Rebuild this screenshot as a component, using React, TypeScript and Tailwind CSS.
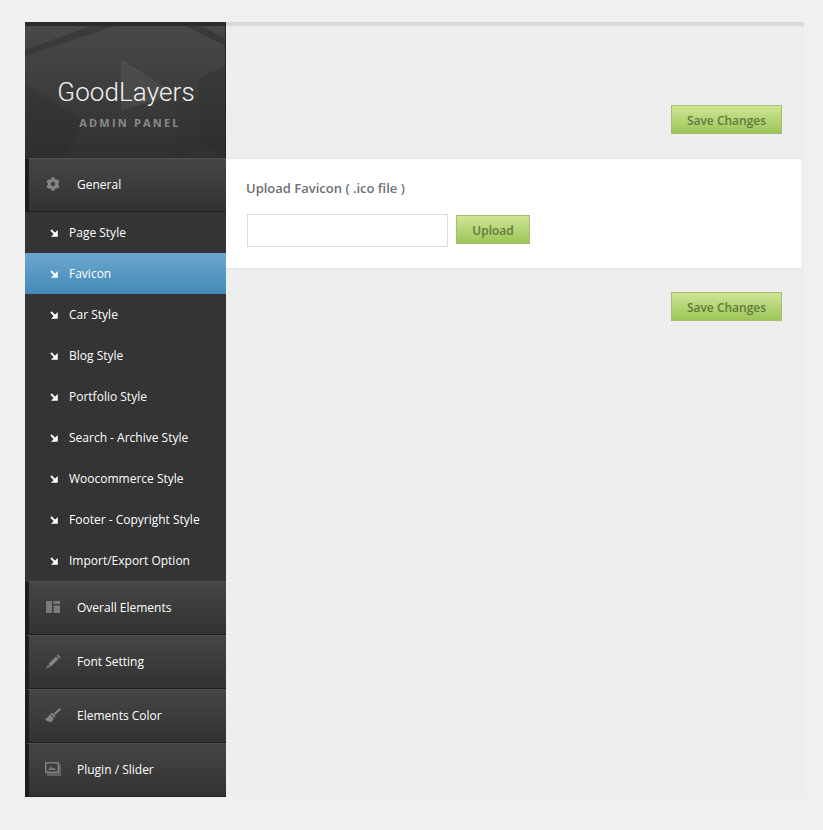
import type { ReactNode } from 'react';
import { FaCog } from 'react-icons/fa';

const subItems = [
  'Page Style',
  'Favicon',
  'Car Style',
  'Blog Style',
  'Portfolio Style',
  'Search - Archive Style',
  'Woocommerce Style',
  'Footer - Copyright Style',
  'Import/Export Option',
];

function LayoutIcon() {
  return (
    <svg width="14" height="12" viewBox="0 0 14 12" fill="#7a7a7a">
      <rect x="0" y="0" width="6" height="12" />
      <rect x="7.5" y="0" width="6.5" height="3" />
      <rect x="7.5" y="4.5" width="6.5" height="7.5" />
    </svg>
  );
}

function PencilIcon() {
  return (
    <svg width="15" height="15" viewBox="0 0 15 15" fill="#858585">
      <path d="M12 0.5 L14.5 3 L13.2 4.3 L10.7 1.8 Z" />
      <path d="M10 2.5 L12.5 5 L5 12.5 L2.5 10 Z" />
      <path d="M2 10.8 L4.2 13 L1.2 14 L0 15 L0.6 13.6 Z" />
    </svg>
  );
}

function BrushIcon() {
  return (
    <svg width="16" height="15" viewBox="0 0 16 15" fill="#858585">
      <path d="M14.5 0 L16 1.5 L10 7 L8.6 5.6 Z" />
      <path d="M6.8 4.6 L10.6 8.2 L9.2 9.8 L5.2 6 Z" />
      <path d="M4.6 6.6 L8.8 10.6 L6.4 14.6 L4.6 13.2 L4 14.2 L2.6 12.8 L2 13.4 L0 10.6 L2.2 9.8 Z" />
    </svg>
  );
}

function SliderIcon() {
  return (
    <svg width="16" height="14" viewBox="0 0 16 14">
      <rect x="2" y="2" width="14" height="12" fill="#626262" />
      <rect x="0" y="0" width="14" height="11" fill="#808080" />
      <rect x="1.5" y="1.5" width="11" height="8" fill="#3c3c3c" />
      <path d="M3 8 L5.5 4.5 L7.5 6.5 L9 5.5 L11 8 Z" fill="#7a7a7a" />
    </svg>
  );
}

function ArrowIcon() {
  return (
    <svg width="8" height="8" viewBox="0 0 8 8" fill="none" stroke="#fff">
      <path d="M1 1 L6 6" strokeWidth="1.8" />
      <path d="M7.5 1.5 V7.5 H1.5 Z" fill="#fff" strokeWidth="0.5" />
    </svg>
  );
}

function MainItem({ icon, label }: { icon: ReactNode; label: string }) {
  return (
    <div className="flex h-[54px] items-center border-t border-b border-l-4 border-t-[#4f4f4f] border-b-[#1f1f1f] border-l-[#1e1e1e] bg-linear-to-b from-[#464646] to-[#323232]">
      <div className="flex w-[48px] justify-center pb-[2px]">{icon}</div>
      <span className="text-[12px] text-white">{label}</span>
    </div>
  );
}

function GreenButton({ label, width }: { label: string; width: string }) {
  return (
    <button className={`h-[29px] ${width} border border-[#a5bf72] bg-linear-to-b from-[#cfe596] to-[#9cc656] pt-[2px] text-[12px] font-semibold text-[#617a3c]`}>
      {label}
    </button>
  );
}

export default function App() {
  return (
    <div className="min-h-[830px] bg-[#f0f0f0] px-[25px] pt-[22px] font-['Open_Sans',sans-serif]">
      <div className="flex h-[775px] w-[779px]">
        <aside className="w-[201px] shrink-0 bg-[#333] bg-[linear-gradient(135deg,#303030_25%,#383838_25%,#383838_50%,#303030_50%,#303030_75%,#383838_75%)] bg-[length:4px_4px]">
          <div className="relative h-[136px] overflow-hidden border-t-4 border-r border-t-[#2b2b2b] border-r-[#262626] bg-[linear-gradient(135deg,#0000_25%,#00000018_25%,#00000018_50%,#0000_50%,#0000_75%,#00000018_75%),linear-gradient(#4c4c4c,#333333)] bg-[length:4px_4px,100%_100%]">
            <svg className="absolute inset-0" width="201" height="132" viewBox="0 0 201 132">
              <path d="M0 30 L90 0 H66 L0 24 Z" fill="#2c2c2c" opacity="0.45" />
              <path d="M160 0 L201 20 V13 L176 0 Z" fill="#2c2c2c" opacity="0.5" />
              <path d="M0 58 L60 96 L38 132 H0 Z" fill="#252525" opacity="0.2" />
              <path d="M96 33 L150 68 L96 85 Z" fill="#666" opacity="0.3" />
              <path d="M174 52 L201 40 V132 L174 115 Z" fill="#252525" opacity="0.25" />
              <path d="M150 78 L174 72 V118 L150 132 Z" fill="#2a2a2a" opacity="0.15" />
            </svg>
            <div className="relative flex flex-col items-center pt-[48px] pl-[2px]">
              <div className="font-['Roboto',sans-serif] text-[26px] leading-[36px] font-light tracking-[0.1px] text-[#f2f2f2]">
                GoodLayers
              </div>
              <div className="mt-[5px] pl-[8px] text-[11px] leading-[16px] font-bold tracking-[2.2px] text-[#8b8b8b]">
                ADMIN PANEL
              </div>
            </div>
          </div>

          <MainItem icon={<FaCog size={14} color="#858585" />} label="General" />

          {subItems.map((item) => (
            <div
              key={item}
              className={`flex h-[41px] items-center pl-[25px] text-[12px] text-white ${
                item === 'Favicon'
                  ? 'bg-[linear-gradient(135deg,#0000_25%,#ffffff0c_25%,#ffffff0c_50%,#0000_50%,#0000_75%,#ffffff0c_75%),linear-gradient(#68a5cd,#3f86b6)] bg-[length:4px_4px,100%_100%]'
                  : ''
              }`}
            >
              <ArrowIcon />
              <span className="ml-[11px]">{item}</span>
            </div>
          ))}

          <MainItem icon={<LayoutIcon />} label="Overall Elements" />
          <MainItem icon={<PencilIcon />} label="Font Setting" />
          <MainItem icon={<BrushIcon />} label="Elements Color" />
          <MainItem icon={<SliderIcon />} label="Plugin / Slider" />
        </aside>

        <main className="flex flex-1 flex-col border-t-4 border-r border-t-[#d9d9d9] border-r-[#ebebeb] bg-[#efefef] bg-[linear-gradient(135deg,#ebebeb_25%,#f1f1f1_25%,#f1f1f1_50%,#ebebeb_50%,#ebebeb_75%,#f1f1f1_75%)] bg-[length:4px_4px]">
          <div className="flex h-[132px] items-end justify-end pr-[21px] pb-[24px]">
            <GreenButton label="Save Changes" width="w-[111px]" />
          </div>
          <div className="h-[111px] border-y border-[#e5e5e5] bg-[#f0f0f0]">
            <div className="mr-[2px] h-full bg-white pt-[20px] pl-[20px]">
              <div className="text-[13px] leading-[18px] font-semibold text-[#6c7075]">Upload Favicon ( .ico file )</div>
              <div className="mt-[17px] ml-[1px] flex items-start gap-[8px]">
                <input className="h-[33px] w-[201px] border border-[#dcdcdc] bg-white" type="text" />
                <div className="mt-[1px] flex">
                  <GreenButton label="Upload" width="w-[74px]" />
                </div>
              </div>
            </div>
          </div>
          <div className="flex justify-end pt-[23px] pr-[21px]">
            <GreenButton label="Save Changes" width="w-[111px]" />
          </div>
        </main>
      </div>
    </div>
  );
}
